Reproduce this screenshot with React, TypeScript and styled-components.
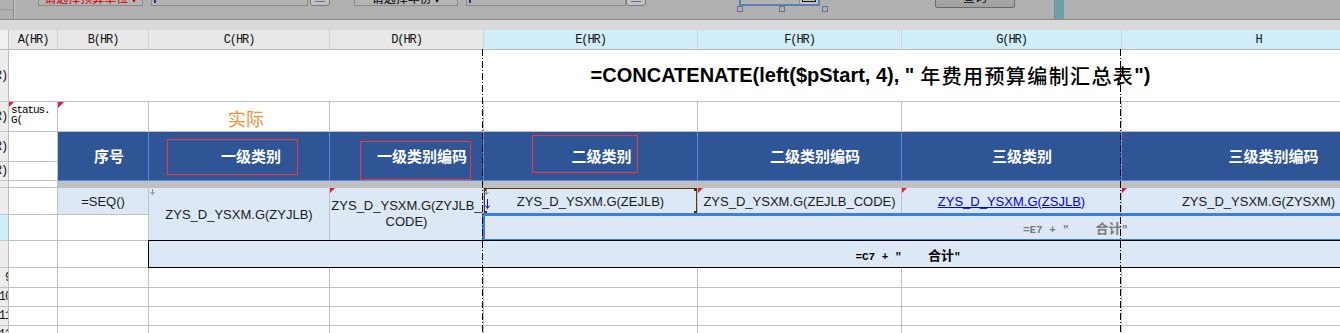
import React from "react";
import styled, { createGlobalStyle } from "styled-components";

const MONO = `"Liberation Mono", "Noto Sans CJK SC", monospace`;
const CJK = `"Noto Sans CJK SC", "Liberation Sans", sans-serif`;

const palette = {
  line: "#c0c0c0",
  head: "#2f5597",
  headLine: "#4d8fe6",
  fill: "#dce8f5",
  flag: "#e8173f",
};

const columns = [
  { label: "A(HR)", width: 49 },
  { label: "B(HR)", width: 91 },
  { label: "C(HR)", width: 181 },
  { label: "D(HR)", width: 154 },
  { label: "E(HR)", width: 214, active: true },
  { label: "F(HR)", width: 204, active: true },
  { label: "G(HR)", width: 220, active: true },
  { label: "H", width: 274, active: true },
  { label: "", width: 272, active: true },
];

// the row-header column is scrolled so only the tail of each label shows
const rowHeads = [
  { r: 2, label: "1(HR)" },
  { r: 3, label: "2(HR)" },
  { r: 4, label: "3(HR)" },
  { r: 5, label: "4(HR)" },
  { r: 6, label: "" },
  { r: 7, label: "" },
  { r: 8, label: "", active: true },
  { r: 9, label: "" },
  { r: 10, label: "9", clip: true },
  { r: 11, label: "10", clip: true },
  { r: 12, label: "11", clip: true },
  { r: 13, label: "12", clip: true },
];

const heads = [
  { c: 3, text: "序号", shift: 12 },
  { c: 4, text: "一级类别", shift: 24, box: { x: 18, y: 7, w: 131, h: 36 } },
  { c: 5, text: "一级类别编码", shift: 31, box: { x: 30, y: 9, w: 111, h: 39 } },
  { c: 6, text: "二级类别", shift: 22, box: { x: 48, y: 3, w: 106, h: 38 } },
  { c: 7, text: "二级类别编码", shift: 31 },
  { c: 8, text: "三级类别", shift: 21 },
  { c: 9, text: "三级类别编码", shift: 30 },
  { c: 10, text: "", shift: 0 },
];

const GlobalStyle = createGlobalStyle`
  html, body { margin: 0; padding: 0; background: #ffffff; }
  body { font-family: "Liberation Sans", "Noto Sans CJK SC", sans-serif; }
`;

const Page = styled.div`
  width: 1340px;
  height: 333px;
  overflow: hidden;
  background: #ffffff;
`;

/* ---------- query bar (mostly scrolled off the top) ---------- */

const Toolbar = styled.div`
  height: 19px;
  display: flex;
  align-items: flex-start;
  background: #b0b0b0;
  border-bottom: 1px solid #8a8a8a;
  overflow: hidden;
`;

const GroupEdge = styled.div`
  position: relative;
  flex: none;
  width: 13px;
  height: 19px;
  border-right: 1px solid #868686;
  box-shadow: 1px 0 0 #c8c8c8;

  &::before {
    content: "";
    position: absolute;
    left: 0;
    right: 0;
    top: 9px;
    border-top: 1px solid #9a9a9a;
  }
`;

const Controls = styled.div`
  display: flex;
  align-items: flex-start;
  margin: -14px 0 0 24px;
`;

const Select = styled.div<{ $w: number; $gap?: number; $tone?: string }>`
  flex: none;
  box-sizing: border-box;
  width: ${(p) => p.$w}px;
  height: 20px;
  margin-left: ${(p) => p.$gap ?? 0}px;
  display: flex;
  align-items: flex-end;
  justify-content: center;
  padding-bottom: 1px;
  border: 1px solid #8a8a8a;
  background: #b4b4b4;
  color: ${(p) => p.$tone ?? "#000"};
  font: 12px/13px ${CJK};
`;

const Field = styled.div<{ $w: number; $gap?: number }>`
  position: relative;
  flex: none;
  box-sizing: border-box;
  width: ${(p) => p.$w}px;
  height: 20px;
  margin-left: ${(p) => p.$gap ?? 0}px;
  border: 1px solid #8a8a8a;
  background: #b3b3b3;

  &::after {
    content: "";
    position: absolute;
    left: 2px;
    bottom: 2px;
    width: 2px;
    height: 3px;
    background: #1d3b78;
  }
`;

const PickButton = styled.div<{ $gap?: number }>`
  flex: none;
  box-sizing: border-box;
  width: 20px;
  height: 20px;
  margin-left: ${(p) => p.$gap ?? 0}px;
  display: flex;
  align-items: flex-end;
  justify-content: center;
  padding-bottom: 3px;
  border: 1px solid #7a7a7a;
  border-radius: 3px;
  background: #c2c2c2;

  span {
    width: 10px;
    height: 1px;
    background: #5d7394;
  }
`;

const DateBox = styled.div`
  position: relative;
  flex: none;
  box-sizing: border-box;
  width: 81px;
  height: 20px;
  margin-left: 93px;
  display: flex;
  justify-content: flex-end;
  border: 2px solid #5b80b8;
  background: #b3b3b3;
`;

const CalButton = styled.div`
  box-sizing: border-box;
  width: 19px;
  height: 100%;
  display: flex;
  align-items: flex-end;
  justify-content: center;
  padding-bottom: 2px;
  border-left: 1px solid #8a8a8a;
  background: #c4c4c4;

  span {
    box-sizing: border-box;
    width: 14px;
    height: 6px;
    border: 1px solid #111;
    border-top-style: dotted;
  }
`;

const Handle = styled.span<{ $x: number }>`
  position: absolute;
  top: 18px;
  left: ${(p) => p.$x}px;
  box-sizing: border-box;
  width: 6px;
  height: 6px;
  border: 1px solid #5f7592;
  background: #b0b0b0;
`;

const QueryButton = styled.div`
  flex: none;
  box-sizing: border-box;
  width: 80px;
  height: 22px;
  margin-left: 115px;
  display: flex;
  align-items: flex-end;
  justify-content: center;
  padding-bottom: 4px;
  border: 1px solid #6b6b6b;
  border-radius: 2px;
  background: linear-gradient(#b9b9b9, #9f9f9f);
  font: 12px/13px ${CJK};
  color: #000;
`;

const Divider = styled.div`
  flex: none;
  width: 1px;
  height: 33px;
  margin-left: 39px;
  background: #8a8a8a;
`;

const Splitter = styled.div`
  flex: none;
  width: 9px;
  height: 33px;
  background: #6d9fab;
`;

const Strip = styled.div`
  height: 10px;
  background: #d9d9d9;
`;

/* ---------- sheet ---------- */

const Sheet = styled.div`
  position: relative;
  display: grid;
  width: max-content;
  grid-template-columns: 9px ${columns.map((c) => `${c.width}px`).join(" ")};
  grid-template-rows: 20px 52px 30px 30px 19px 7px 27px 26px 27px 20px 19px 19px 19px;
`;

const ColHead = styled.div<{ $c: number; $active?: boolean }>`
  grid-column: ${(p) => p.$c};
  grid-row: 1;
  box-sizing: border-box;
  display: flex;
  align-items: center;
  justify-content: center;
  background: ${(p) => (p.$active ? "#cfeef9" : "#e8e8e8")};
  border-right: 1px solid #d3d3d3;
  border-bottom: 1px solid #b7b7b7;
  font: 12px ${MONO};
  letter-spacing: -1.1px;
  color: #111;
`;

const Corner = styled.div`
  grid-column: 1;
  grid-row: 1;
  background: #f0f0f0;
  border-right: 1px solid #c4c4c4;
  border-bottom: 1px solid #b7b7b7;
`;

const RowHead = styled.div<{ $r: number; $active?: boolean; $clip?: boolean }>`
  grid-column: 1;
  grid-row: ${(p) => p.$r};
  box-sizing: border-box;
  display: flex;
  align-items: center;
  justify-content: flex-end;
  overflow: hidden;
  background: ${(p) => (p.$active ? "#cfeef9" : "#ececec")};
  border-right: 1px solid #bdbdbd;
  border-bottom: 1px solid #c6c6c6;
  font: 12px ${MONO};
  letter-spacing: -1.1px;
  color: #111;

  span {
    flex: none;
    margin-right: ${(p) => (p.$clip ? -3 : 1)}px;
  }
`;

type Place = { $c: number; $r: number; $cs?: number; $rs?: number; $bg?: string };

const Cell = styled.div<Place>`
  grid-column: ${(p) => p.$c} / span ${(p) => p.$cs ?? 1};
  grid-row: ${(p) => p.$r} / span ${(p) => p.$rs ?? 1};
  position: relative;
  box-sizing: border-box;
  min-width: 0;
  display: flex;
  align-items: center;
  justify-content: center;
  background: ${(p) => p.$bg ?? "#ffffff"};
  border-right: 1px solid ${palette.line};
  border-bottom: 1px solid ${palette.line};
  font-size: 13px;
  color: #1b1b1b;
  white-space: nowrap;
`;

const TitleCell = styled(Cell)`
  border-right: none;
  padding-left: 64px;
  font-size: 20px;
  font-weight: 700;
  color: #000;

  span {
    font-family: ${CJK};
    font-weight: 500;
    letter-spacing: 1.4px;
  }
`;

const NoteCell = styled(Cell)`
  align-items: flex-start;
  justify-content: flex-start;
  padding: 3px 0 0 2px;
  font: 11px/10px ${MONO};
  letter-spacing: -1.1px;
  color: #000;
`;

const ActualCell = styled(Cell)`
  padding: 2px 0 0 14px;
  font: 18px ${CJK};
  color: #f3913f;
`;

const HeadCell = styled(Cell)<{ $shift: number }>`
  padding-left: ${(p) => p.$shift}px;
  padding-bottom: 2px;
  background: ${palette.head};
  border-right-color: ${palette.headLine};
  border-bottom-color: ${palette.headLine};
  font: 700 15px ${CJK};
  color: #ffffff;
`;

const RedBox = styled.span<{ $x: number; $y: number; $w: number; $h: number }>`
  position: absolute;
  left: ${(p) => p.$x}px;
  top: ${(p) => p.$y}px;
  width: ${(p) => p.$w}px;
  height: ${(p) => p.$h}px;
  box-sizing: border-box;
  border: 1px solid #f0383b;
`;

const WrapText = styled.div`
  white-space: normal;
  text-align: center;
  line-height: 16px;
`;

const Link = styled.span`
  color: #0000ee;
  text-decoration: underline;
`;

const PickedCell = styled(Cell)`
  box-shadow: inset 0 0 0 1px #5b3a1b;
`;

const Knob = styled.span<{ $top?: boolean; $left?: boolean }>`
  position: absolute;
  ${(p) => (p.$top ? "top: 0;" : "bottom: 0;")}
  ${(p) => (p.$left ? "left: 0;" : "right: 0;")}
  width: 3px;
  height: 3px;
  background: #4a2e14;
`;

const RangeCell = styled(Cell)`
  &::after {
    content: "";
    position: absolute;
    top: -2px;
    left: -2px;
    right: 0;
    bottom: -2px;
    border: 3px solid #3b7fe1;
    border-right: none;
  }
`;

const TotalCell = styled(Cell)`
  &::after {
    content: "";
    position: absolute;
    top: -1px;
    left: -1px;
    right: 0;
    bottom: -1px;
    border: 1px solid #000;
    border-right: none;
  }
`;

const Formula = styled.span<{ $muted?: boolean }>`
  white-space: pre;
  font: 700 11px ${MONO};
  color: ${(p) => (p.$muted ? "#7b7b7b" : "#000")};

  b {
    font: 700 13px ${CJK};
  }
`;

const Flag = styled.span<{ $size?: number }>`
  position: absolute;
  top: 0;
  left: 0;
  width: 0;
  height: 0;
  border-top: ${(p) => p.$size ?? 5}px solid ${palette.flag};
  border-right: ${(p) => p.$size ?? 5}px solid transparent;
`;

const Marker = styled.svg<{ $x: number; $y: number }>`
  position: absolute;
  left: ${(p) => p.$x}px;
  top: ${(p) => p.$y}px;
`;

const PageBreak = styled.div<{ $x: number }>`
  position: absolute;
  top: 19px;
  bottom: 0;
  left: ${(p) => p.$x}px;
  width: 1px;
  z-index: 3;
  background: repeating-linear-gradient(
    to bottom,
    #000 0 7px,
    transparent 7px 9px,
    #000 9px 10px,
    transparent 10px 12px
  );
`;

const GrayArrow = ({ x, y }: { x: number; y: number }) => (
  <Marker $x={x} $y={y} width="5" height="6" viewBox="0 0 5 6">
    <path d="M2.5 0v5M0.5 3l2 2.5 2-2.5" stroke="#8a8a8a" strokeWidth="1" fill="none" />
  </Marker>
);

const App = () => {
  const blankCols = [2, 3, 4, 5, 6, 7, 8, 9, 10];

  return (
    <Page>
      <GlobalStyle />
      <Toolbar>
        <GroupEdge />
        <Controls>
          <Select $w={105} $tone="#d10000">请选择预算单位 ▾</Select>
          <Field $w={157} $gap={8} />
          <PickButton $gap={2}>
            <span />
          </PickButton>
          <Select $w={104} $gap={24}>请选择年份 ▾</Select>
          <Field $w={160} $gap={8} />
          <PickButton>
            <span />
          </PickButton>
          <DateBox>
            <CalButton>
              <span />
            </CalButton>
            <Handle $x={-4} />
            <Handle $x={38} />
            <Handle $x={81} />
          </DateBox>
          <QueryButton>查询</QueryButton>
          <Divider />
          <Splitter />
        </Controls>
      </Toolbar>
      <Strip />

      <Sheet>
        <Corner />
        {columns.map((col, i) => (
          <ColHead key={i} $c={i + 2} $active={col.active}>
            {col.label}
          </ColHead>
        ))}
        {rowHeads.map((row) => (
          <RowHead key={row.r} $r={row.r} $active={row.active} $clip={row.clip}>
            <span>{row.label}</span>
          </RowHead>
        ))}

        {/* row 1: report title */}
        <TitleCell $c={2} $r={2} $cs={9}>
          =CONCATENATE(left($pStart, 4), "<span>&nbsp;年费用预算编制汇总表</span>")
        </TitleCell>

        {/* row 2 */}
        <NoteCell $c={2} $r={3}>
          <Flag />
          status.
          <br />
          G(
        </NoteCell>
        <Cell $c={3} $r={3}>
          <Flag $size={6} />
        </Cell>
        <ActualCell $c={4} $r={3}>实际</ActualCell>
        {[5, 6, 7, 8, 9, 10].map((c) => (
          <Cell key={c} $c={c} $r={3} />
        ))}

        {/* rows 3-4: column titles */}
        <Cell $c={2} $r={4} />
        <Cell $c={2} $r={5} />
        {heads.map((h) => (
          <HeadCell key={h.c} $c={h.c} $r={4} $rs={2} $shift={h.shift}>
            {h.text}
            {h.box && <RedBox $x={h.box.x} $y={h.box.y} $w={h.box.w} $h={h.box.h} />}
          </HeadCell>
        ))}

        {/* row 5: separator */}
        <Cell $c={2} $r={6} />
        <Cell $c={3} $r={6} $cs={8} $bg="#c0c0c0" />

        {/* row 6: detail */}
        <Cell $c={2} $r={7} />
        <Cell $c={3} $r={7} $bg={palette.fill}>=SEQ()</Cell>
        <Cell $c={4} $r={7} $rs={2} $bg={palette.fill}>
          <GrayArrow x={1} y={1} />
          ZYS_D_YSXM.G(ZYJLB)
        </Cell>
        <Cell $c={5} $r={7} $rs={2} $bg={palette.fill}>
          <Flag />
          <WrapText>
            ZYS_D_YSXM.G(ZYJLB_
            <br />
            CODE)
          </WrapText>
        </Cell>
        <PickedCell $c={6} $r={7} $bg={palette.fill}>
          <Knob $top $left />
          <Knob $top />
          <Knob $left />
          <Knob />
          <GrayArrow x={0} y={1} />
          <Marker $x={1} $y={11} width="5" height="10" viewBox="0 0 5 10">
            <path d="M2.5 0v9M0.5 6.5l2 3 2-3" stroke="#1010f0" strokeWidth="1" fill="none" />
          </Marker>
          ZYS_D_YSXM.G(ZEJLB)
        </PickedCell>
        <Cell $c={7} $r={7} $bg={palette.fill}>
          <Flag />
          ZYS_D_YSXM.G(ZEJLB_CODE)
        </Cell>
        <Cell $c={8} $r={7} $bg={palette.fill}>
          <Flag />
          <Link>ZYS_D_YSXM.G(ZSJLB)</Link>
        </Cell>
        <Cell $c={9} $r={7} $bg={palette.fill}>
          <Flag />
          ZYS_D_YSXM.G(ZYSXM)
        </Cell>
        <Cell $c={10} $r={7} $bg={palette.fill} />

        {/* row 7: group subtotal */}
        <Cell $c={2} $r={8} />
        <Cell $c={3} $r={8} />
        <RangeCell $c={6} $r={8} $cs={5} $bg={palette.fill}>
          <Formula $muted>
            {'=E7 + "    '}
            <b>合计</b>
            {'"'}
          </Formula>
        </RangeCell>

        {/* row 8: grand total */}
        <Cell $c={2} $r={9} />
        <Cell $c={3} $r={9} />
        <TotalCell $c={4} $r={9} $cs={7} $bg={palette.fill}>
          <Formula>
            {'=C7 + "    '}
            <b>合计</b>
            {'"'}
          </Formula>
        </TotalCell>

        {/* empty rows */}
        {[10, 11, 12, 13].map((r) =>
          blankCols.map((c) => <Cell key={`${r}-${c}`} $c={c} $r={r} />)
        )}

        <PageBreak $x={482} />
        <PageBreak $x={1120} />
      </Sheet>
    </Page>
  );
};

export default App;
